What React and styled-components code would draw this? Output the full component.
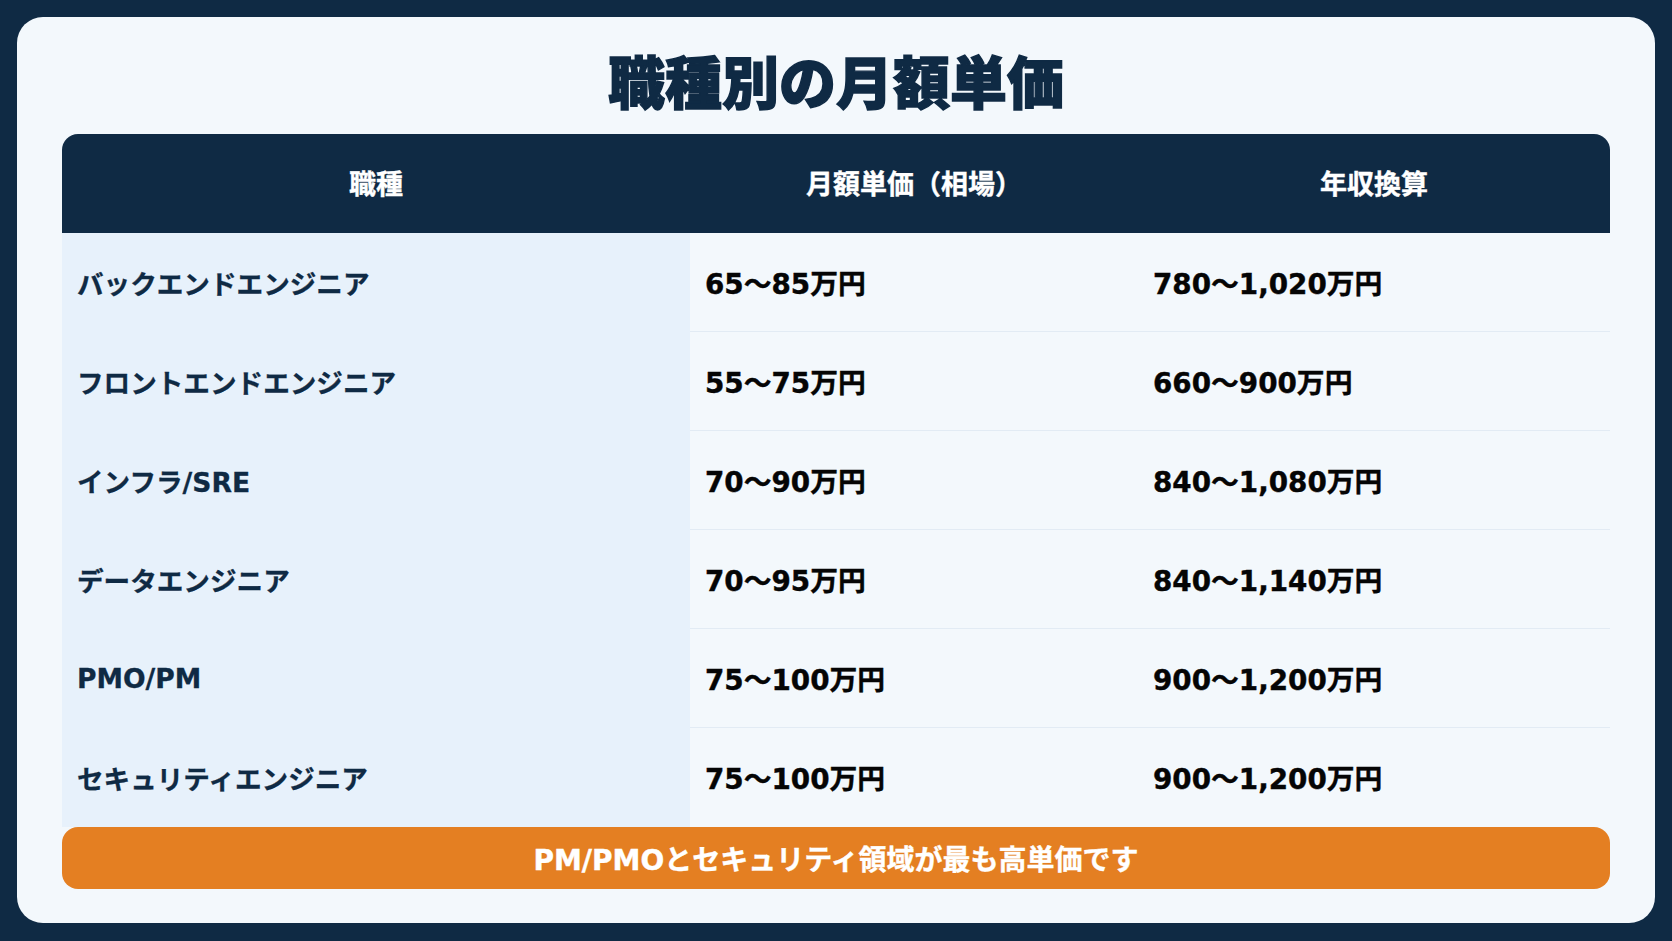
import React from "react";
import styled, { createGlobalStyle } from "styled-components";

const GlobalStyle = createGlobalStyle`
  html, body {
    margin: 0;
    padding: 0;
    background: #0f2a44;
  }
  body {
    font-family: "DejaVu Sans", "Noto Sans CJK JP", sans-serif;
  }
  * { box-sizing: border-box; }
`;

const Page = styled.div`
  width: 1672px;
  height: 941px;
  padding: 17px;
  background: #0f2a44;
`;

const Card = styled.div`
  height: 906px;
  width: 1638px;
  background: #f3f8fc;
  border-radius: 26px;
  padding: 28px 45px 34px;
  display: flex;
  flex-direction: column;
`;

const Title = styled.h1`
  margin: 0 0 21px;
  text-align: center;
  font-family: "Noto Sans CJK JP", sans-serif;
  font-size: 57px;
  font-weight: 900;
  line-height: 68px;
  color: #0f2a44;
  -webkit-text-stroke: 1.4px #0f2a44;
`;

const Table = styled.div`
  display: grid;
  grid-template-columns: 628px 448px 1fr;
`;

const HeadCell = styled.div`
  height: 99px;
  padding-bottom: 3px;
  display: flex;
  align-items: center;
  justify-content: center;
  background: #0f2a44;
  color: #ffffff;
  font-size: 27px;
  font-weight: 700;
  -webkit-text-stroke: 0.4px #ffffff;
  border-top-left-radius: ${(p) => (p.$first ? "16px" : "0")};
  border-top-right-radius: ${(p) => (p.$last ? "16px" : "0")};
`;

const NameCell = styled.div`
  height: 99px;
  display: flex;
  align-items: center;
  padding-left: 15px;
  background: #e7f1fb;
  color: #0f2a44;
  font-size: 26.6px;
  font-weight: 700;
  -webkit-text-stroke: 0.3px #0f2a44;
`;

const ValueCell = styled.div`
  height: 99px;
  display: flex;
  align-items: center;
  padding-left: 15px;
  color: #050505;
  font-size: 27.8px;
  font-weight: 700;
  -webkit-text-stroke: 0.4px #050505;
  border-bottom: 1px solid ${(p) => (p.$last ? "transparent" : "#e2ebf4")};
`;

const Callout = styled.div`
  height: 62px;
  border-radius: 16px;
  background: #e47f22;
  color: #ffffff;
  display: flex;
  align-items: center;
  justify-content: center;
  font-size: 28px;
  font-weight: 700;
  -webkit-text-stroke: 0.4px #ffffff;
`;

const rows = [
  ["バックエンドエンジニア", "65〜85万円", "780〜1,020万円"],
  ["フロントエンドエンジニア", "55〜75万円", "660〜900万円"],
  ["インフラ/SRE", "70〜90万円", "840〜1,080万円"],
  ["データエンジニア", "70〜95万円", "840〜1,140万円"],
  ["PMO/PM", "75〜100万円", "900〜1,200万円"],
  ["セキュリティエンジニア", "75〜100万円", "900〜1,200万円"],
];

export default function App() {
  return (
    <>
      <GlobalStyle />
      <Page>
        <Card>
          <Title>職種別の月額単価</Title>
          <Table>
            <HeadCell $first>職種</HeadCell>
            <HeadCell>月額単価（相場）</HeadCell>
            <HeadCell $last>年収換算</HeadCell>
            {rows.map((r, i) => {
              const last = i === rows.length - 1;
              return (
                <React.Fragment key={r[0]}>
                  <NameCell>{r[0]}</NameCell>
                  <ValueCell $last={last}>{r[1]}</ValueCell>
                  <ValueCell $last={last}>{r[2]}</ValueCell>
                </React.Fragment>
              );
            })}
          </Table>
          <Callout>PM/PMOとセキュリティ領域が最も高単価です</Callout>
        </Card>
      </Page>
    </>
  );
}
